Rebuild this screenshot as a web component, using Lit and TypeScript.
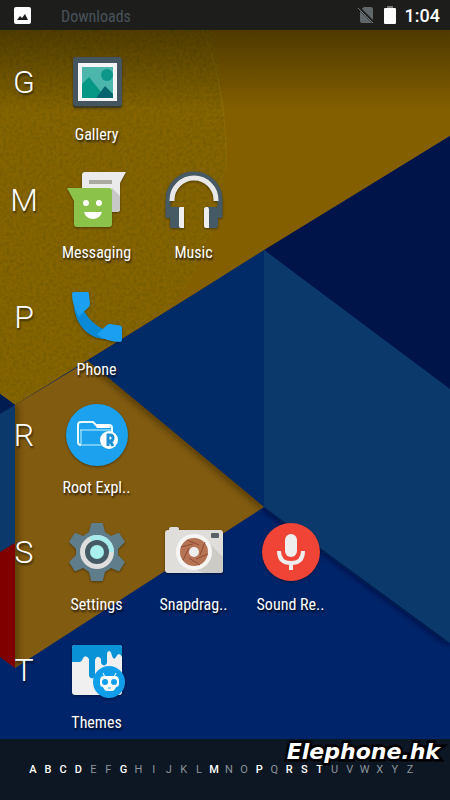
import { LitElement, html, css, svg } from "lit";
import { customElement } from "lit/decorators.js";

type App = { name: string; icon: unknown };
type Section = { letter: string; apps: App[] };

const icon = (body: unknown) => html`<svg class="icon" viewBox="0 0 64 64" aria-hidden="true">${body}</svg>`;

const gallery = icon(svg`
  <rect x="8" y="8" width="49" height="50" rx="3" fill="#2b3740" opacity=".6"/>
  <rect x="8" y="7" width="49" height="49" rx="3" fill="#455560"/>
  <rect x="13" y="13" width="39" height="38" fill="#f4f4f4"/>
  <rect x="17" y="17" width="31" height="31" fill="#4db6ac"/>
  <circle cx="42" cy="25" r="6" fill="#0d978a"/>
  <path d="M17 48V34L24 27L36 42V48Z" fill="#069785"/>
  <path d="M31 48L40 36L48 44V48Z" fill="#05646d"/>`);

const messaging = icon(svg`
  <path d="M20 4H61L55 15V41q0 3-3 3H20q-3 0-3-3V7q0-3 3-3Z" fill="#ebebeb"/>
  <path d="M47 20L55 28V41q0 3-3 3H47Z" fill="#c8c8c8"/>
  <rect x="24" y="12" width="23" height="4" fill="#aaa99f"/>
  <path d="M2 20H44q3 0 3 3V56q0 3-3 3H12q-3 0-3-3V33Z" fill="#8bc34a"/>
  <circle cx="21" cy="35" r="3" fill="#fff"/><circle cx="34" cy="35" r="3" fill="#fff"/>
  <path d="M19 44H37Q35 51 28 51Q21 51 19 44Z" fill="#fff"/>`);

const music = icon(svg`
  <path d="M6 49V32a26 26 0 0 1 52 0V49" fill="none" stroke="#455a64" stroke-width="5"/>
  <path d="M10 33V32a22 22 0 0 1 44 0v1" fill="none" stroke="#e8e8e8" stroke-width="5"/>
  <path d="M8 39H18V60H10q-2 0-2-2V50H4V39Z" fill="#455a64"/>
  <path d="M56 39H46V60H54q2 0 2-2V50H60V39Z" fill="#455a64"/>
  <path d="M18 39H22V60H19q-2 0-2-2V41q0-2 1-2Z" fill="#eee"/>
  <path d="M46 39H44q-2 0-2 2V58q0 2 2 2H47V41Z" fill="#eee"/>`);

const phone = icon(svg`
  <path d="M9 22L19.500 27Q27 39 38 44L40 54C22 53 11 39 9 22Z" fill="#0a8ad6"/>
  <path d="M7 9q0-2 2-2H22q2 0 2 2L25 19Q25 21 24 22L14 31.500Q7 20 7 9Z" fill="#1ba0f1"/>
  <path d="M32 49.500L42 40Q43 39 45 39L55 40.500q2 0 2 2V55q0 2-2 2Q42 57 32 49.500Z" fill="#1ba0f1"/>`);

const rootExplorer = icon(svg`
  <circle cx="32" cy="32" r="31" fill="#1ba1ee"/>
  <path d="M16 42q-3 0-3-3V22q0-3 3-3H28L31 22H44q3 0 3 3V32" fill="none" stroke="#e7fbff" stroke-width="2"/>
  <path d="M28 19L31 21H43L46 25H32Z" fill="#fff"/>
  <path d="M15 27H46M15 42H38M16 27V41" stroke="#c9f4fc" stroke-width="1"/>
  <circle cx="44" cy="37" r="9" fill="#fff"/>
  <path d="M43 43V32H45q3 0 3 3t-3 3H43M45 38L48 43" fill="none" stroke="#1b91d2" stroke-width="3"/>`);

const settings = icon(svg`
  <path d="M27 3H37Q38 3 38 4L40 12L46 16L53 13Q54 13 55 14L60 22L53 29V35L60 42L55 50Q54 52 53 51L46 48L40 52L38 60Q38 61 37 61H27Q26 61 26 60L24 52L18 48L11 51Q10 52 9 50L4 42L11 35V29L4 22L9 14Q10 13 11 13L18 16L24 12L26 4Q26 3 27 3Z" fill="#607d8b"/>
  <circle cx="32" cy="32" r="17" fill="#dedede"/>
  <path d="M24 17A17 17 0 0 1 49 32H32Z" fill="#a7ebed"/>
  <circle cx="32" cy="32" r="12" fill="#455a64"/>
  <circle cx="32" cy="32" r="7" fill="#a8f0ed"/>`);

const camera = icon(svg`
  <path d="M7 9q0-2 2-2h6q2 0 2 2v5H7Z" fill="#ddd"/>
  <rect x="3" y="10" width="58" height="43" rx="3" fill="#e0deda"/>
  <path d="M44 20L61 37V50q0 3-3 3H42L20 44Z" fill="#cdcbc6"/>
  <circle cx="32" cy="32" r="18" fill="#f5f5f3"/>
  <circle cx="32" cy="32" r="14" fill="#b67455"/>
  <path d="M25 20L37 25M43 22L38 35M46 34L34 39M38 45L27 38M21 40L27 28M19 27L31 24" stroke="#8f4b35" stroke-width="1"/>
  <circle cx="32" cy="32" r="5" fill="#eee"/>
  <rect x="49" y="13" width="8" height="5" rx="1" fill="#596266"/>`);

const recorder = icon(svg`
  <circle cx="32" cy="32" r="29" fill="#f04437"/>
  <rect x="26" y="14" width="12" height="23" rx="6" fill="#eee"/>
  <path d="M20 31q0 12 12 12t12-12M32 43v7" fill="none" stroke="#eee" stroke-width="4"/>`);

const themes = icon(svg`
  <rect x="7" y="7" width="50" height="50" rx="3" fill="#f0f0f0"/>
  <path d="M7 24V10q0-3 3-3H54q3 0 3 3V19q-3-6-6 0q-2 4-4-1q-2-8-5-3v10q-3 5-6 0V21q-4-5-6 1V38q-3 5-6 0V21q-3-5-6-1q-1 4-4 4Z" fill="#0a92d6"/>
  <circle cx="44" cy="44" r="16" fill="#109de9"/>
  <path d="M38 35l2 4M51 35l-2 4" stroke="#fff" stroke-width="1"/>
  <path d="M39 38H50q4 0 4 5v2q0 4-3 4l-1 2q-1 2-3 2H42q-2 0-3-2l-1-2q-3 0-3-4v-2q0-5 4-5Z" fill="#fff"/>
  <circle cx="40" cy="44" r="3" fill="#109de9"/><circle cx="49" cy="44" r="3" fill="#109de9"/>
  <path d="M43 50h3" stroke="#109de9" stroke-width="1"/>`);

const sections: Section[] = [
  { letter: "G", apps: [{ name: "Gallery", icon: gallery }] },
  { letter: "M", apps: [{ name: "Messaging", icon: messaging }, { name: "Music", icon: music }] },
  { letter: "P", apps: [{ name: "Phone", icon: phone }] },
  { letter: "R", apps: [{ name: "Root Expl..", icon: rootExplorer }] },
  { letter: "S", apps: [{ name: "Settings", icon: settings }, { name: "Snapdrag..", icon: camera }, { name: "Sound Re..", icon: recorder }] },
  { letter: "T", apps: [{ name: "Themes", icon: themes }] },
];

const available = new Set("ABCDGMPRST");

@customElement("app-root")
export class AppRoot extends LitElement {
  static styles = css`
    :host { display: block; font-family: "Roboto Condensed", Roboto, sans-serif; color: #fff; }
    * { box-sizing: border-box; }
    .screen { position: relative; isolation: isolate; min-height: 100vh; display: flex; flex-direction: column; overflow: hidden; background: #002469; }
    .wallpaper { position: absolute; inset: 0; width: 100%; height: 100%; z-index: -1; }
    .status { height: 30px; background: #1d1e1b; display: flex; align-items: center; padding: 0 10px 0 14px; }
    .photo { width: 17px; height: 17px; margin-right: 30px; }
    .downloads { flex: 1; color: #48525b; font-size: 16px; line-height: 30px; padding-top: 3px; }
    .indicators { display: flex; align-items: center; gap: 9px; }
    .sim { width: 18px; height: 18px; }
    .battery { width: 12px; height: 18px; }
    .time { font-family: Roboto, sans-serif; font-size: 18px; font-weight: 500; line-height: 30px; padding-top: 2px; }
    .drawer { flex: 1; display: flex; flex-direction: column; justify-content: space-between; padding: 20px 0 6px; }
    .section { display: grid; grid-template-columns: 48px 1fr; }
    .letter { margin: 0; padding-top: 12px; text-align: center; font: 300 32px/40px Roboto, sans-serif; text-shadow: 1px 2px 2px #0008; }
    .apps { display: flex; }
    .app { width: 97px; padding: 0; border: 0; background: none; color: inherit; display: flex; flex-direction: column; align-items: center; font: 400 16px/20px "Roboto Condensed", Roboto, sans-serif; text-shadow: 1px 2px 2px #000b; gap: 11px; cursor: pointer; }
    .icon { width: 64px; height: 64px; filter: drop-shadow(0 1px 1px #0006); }
    .footer { position: relative; min-height: 61px; background: #0d1623; padding: 22px 34px 0 27px; }
    .index { display: flex; justify-content: space-between; }
    .jump { width: 12px; border: 0; padding: 0; background: none; color: #8b959b; font: 400 11px/18px Roboto, sans-serif; }
    .on { color: #fff; font-weight: 500; }
    .brand { position: absolute; right: 10px; top: 2px; font: italic 700 22px/22px "DejaVu Sans", sans-serif; color: #fff; -webkit-text-stroke: 5px #000; paint-order: stroke fill; }
  `;

  render() {
    return html`<div class="screen">
      <svg class="wallpaper" viewBox="0 0 450 800" preserveAspectRatio="none" aria-hidden="true">
        <defs>
          <linearGradient id="shade" x1="0" y1="0" x2="0" y2="1"><stop offset="0" stop-color="#000" stop-opacity=".4"/><stop offset="1" stop-color="#000" stop-opacity="0"/></linearGradient>
          <filter id="grain" x="0" y="0" width="100%" height="100%"><feTurbulence type="fractalNoise" baseFrequency=".3" numOctaves="2" seed="4"/><feColorMatrix values="0 0 0 0 .1  0 0 0 0 .07  0 0 0 0 0  .8 0 0 0 -.28"/><feComposite in2="SourceGraphic" operator="in"/></filter>
          <filter id="soft" x="-20%" y="-20%" width="140%" height="140%"><feGaussianBlur stdDeviation="3"/></filter>
          <clipPath id="brown"><path d="M15 405L88 361L264 507L15 668Z"/></clipPath>
          <clipPath id="navy"><path d="M264 507L450 643V739H0V680Z"/></clipPath>
        </defs>
        <rect width="450" height="800" fill="#002469"/>
        <path d="M0 0H450V136L15 405L0 394Z" fill="#835f00"/>
        <path d="M0 0H203Q226 70 226 150Q224 250 166 311L15 404L0 394Z" fill="#866500"/>
        <path d="M0 0H203Q226 70 226 150Q224 250 166 311L15 404L0 394Z" fill="#000" filter="url(#grain)"/>
        <path d="M203 30Q228 90 226 170" fill="none" stroke="#96730b" opacity=".6"/>
        <path d="M450 136V390L264 250Z" fill="#001449"/>
        <path d="M264 250L450 389V643L264 507Z" fill="#0b396b"/>
        <path d="M264 250V507L88 361Z" fill="#002b66"/>
        <path d="M15 405L88 361L264 507L15 668Z" fill="#805b10"/>
        <g clip-path="url(#brown)"><path d="M15 668V405M88 361L264 507" fill="none" stroke="#3f2c00" stroke-width="6" opacity=".7" filter="url(#soft)"/></g>
        <g clip-path="url(#navy)"><path d="M264 507L450 643" stroke="#000d38" stroke-width="5" filter="url(#soft)"/></g>
        <path d="M0 394L15 405V668L0 657Z" fill="#0b396b"/>
        <path d="M0 394L15 405L0 414Z" fill="#001c50"/>
        <path d="M0 552L15 543V668L0 657Z" fill="#800000"/>
        <rect y="30" width="450" height="80" fill="url(#shade)"/>
      </svg>
      <header class="status">
        <svg class="photo" viewBox="0 0 17 17" aria-hidden="true"><rect width="17" height="17" rx="2" fill="#fff"/><path d="M3 13L6 9L8 11L11 7L14 13Z" fill="#1d1e1b"/></svg>
        <span class="downloads">Downloads</span>
        <div class="indicators">
          <svg class="sim" viewBox="0 0 18 18" aria-hidden="true"><path d="M3 4L7 1H14q2 0 2 2V15q0 2-2 2H5q-2 0-2-2Z" fill="#5f676a"/><path d="M1 1L18 18" stroke="#1d1e1b" stroke-width="3"/><path d="M1 2L16 17" stroke="#737c7e" stroke-width="1"/></svg>
          <svg class="battery" viewBox="0 0 12 18" aria-hidden="true"><path d="M3 0H9V2H3Z" fill="#777"/><rect y="2" width="12" height="16" rx="1" fill="#fff"/></svg>
          <time class="time">1:04</time>
        </div>
      </header>
      <main class="drawer">
        ${sections.map((s) => html`<section class="section">
          <h2 class="letter">${s.letter}</h2>
          <div class="apps">${s.apps.map((a) => html`<button class="app">${a.icon}<span>${a.name}</span></button>`)}</div>
        </section>`)}
      </main>
      <footer class="footer">
        <nav class="index" aria-label="Alphabet">${[..."ABCDEFGHIJKLMNOPQRSTUVWXYZ"].map((l) => html`<button class="jump ${available.has(l) ? "on" : ""}">${l}</button>`)}</nav>
        <span class="brand">Elephone.hk</span>
      </footer>
    </div>`;
  }
}
